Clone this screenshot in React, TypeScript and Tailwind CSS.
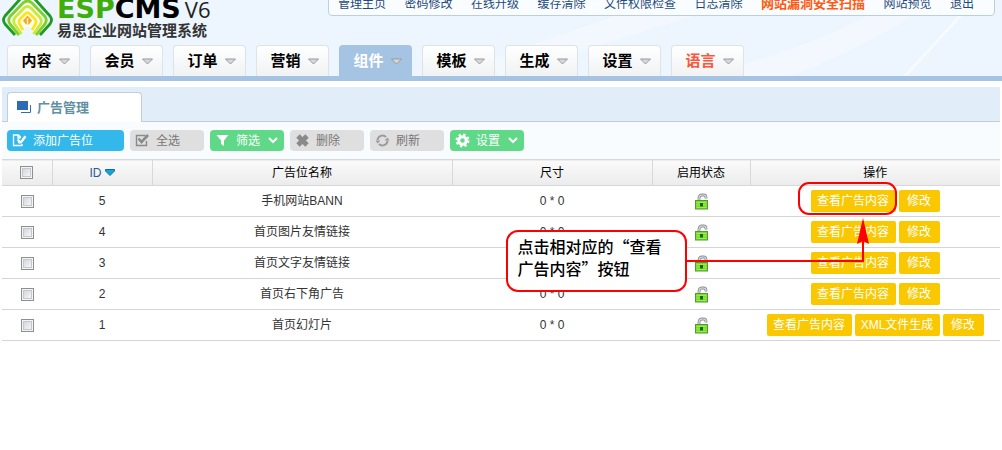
import React from 'react';

const topLinks = [
  '管理主页',
  '密码修改',
  '在线升级',
  '缓存清除',
  '文件权限检查',
  '日志清除',
  '网站漏洞安全扫描',
  '网站预览',
  '退出',
];

const navItems = ['内容', '会员', '订单', '营销', '组件', '模板', '生成', '设置', '语言'];

type Ad = {
  id: number;
  name: string;
  size: string;
  xml?: boolean;
};

const ads: Ad[] = [
  { id: 5, name: '手机网站BANN', size: '0 * 0' },
  { id: 4, name: '首页图片友情链接', size: '0 * 0' },
  { id: 3, name: '首页文字友情链接', size: '0 * 0' },
  { id: 2, name: '首页右下角广告', size: '0 * 0' },
  { id: 1, name: '首页幻灯片', size: '0 * 0', xml: true },
];

function Logo() {
  return (
    <a href="#" className="-mt-3 flex items-start" aria-label="ESPCMS V6">
      <svg width="56" height="48" viewBox="0 0 56 48" className="shrink-0" fill="none" strokeWidth="2.8" strokeLinejoin="round">
        <path d="M9 36 L27.5 6 L46 36 L38 47 L27.5 38 L17 47 Z" fill="#fbfff0" />
        <path d="M15 47 L5 36 Q2 32 5 28 L22 9 Q27.5 4 33 9 L50 28 Q53 32 50 36 L40 47" stroke="#1f9a22" />
        <path d="M19 47 L10 36 Q7.5 32 10 28.5 L23 15 Q27.5 11 32 15 L45 28.5 Q47.5 32 45 36 L36 47" stroke="#7fd02f" />
        <path d="M21.5 46 L14.5 36 Q12.5 32.5 15 29.5 L24 20 Q27.5 17 31 20 L40 29.5 Q42.5 32.5 40.5 36 L33.5 46" stroke="#c8ea3e" />
        <path d="M23 42 L19.5 36 Q18 33 20.5 30.5 L25 26 Q27.5 23.5 30 26 L34.5 30.5 Q37 33 35.5 36 L32 42" stroke="#fbe51e" />
        <path d="M27.5 27.5 L32 32.5 L29 36.5 H26 L23 32.5 Z" fill="#f8a81a" />
        <path d="M27.5 30 V37" stroke="#fff3c0" strokeWidth="1.4" />
      </svg>
      <span className="ml-px flex flex-col pt-[9px]">
        <span className="flex items-baseline text-[27px] leading-6 font-bold whitespace-nowrap text-black font-['DejaVu_Sans',sans-serif]">
          <span className="text-[#3fae0a]">ESP</span>CMS
          <span className="ml-1 text-[22px] font-normal text-[#222] font-['Open_Sans',sans-serif]">V6</span>
        </span>
        <span className="text-[15px] leading-5 font-bold whitespace-nowrap text-[#333]">易思企业网站管理系统</span>
      </span>
    </a>
  );
}

// Pale light beams behind the header
function Beams() {
  return (
    <svg className="absolute inset-0 h-full w-full" viewBox="0 0 1002 76" preserveAspectRatio="none">
      <path d="M490 60 L620 14 L700 14 L500 76 Z" fill="#fff" opacity="0.35" />
      <path d="M790 76 Q860 50 915 14 L870 14 Q800 52 700 76 Z" fill="#fff" opacity="0.35" />
      <path d="M905 76 L962 14" stroke="#fff" strokeWidth="3" opacity="0.6" />
    </svg>
  );
}

function NavArrow() {
  return (
    <svg width="11" height="7" viewBox="0 0 11 7">
      <path d="M0.5 1 H10.5 L5.5 6 Z" fill="#d8d8d8" stroke="#999" />
    </svg>
  );
}

function OpenLock() {
  return (
    <svg width="13" height="17" viewBox="0 0 13 17" className="mx-auto" role="img" aria-label="启用">
      <path d="M4 8 V5 Q4.5 2 7 2 H8.5 Q11 2 11 4.5 V5.5" fill="none" stroke="#8b8f96" strokeWidth="2.8" />
      <path d="M4 8 V5 Q4.5 2 7 2 H8.5 Q11 2 11 4.5 V5" fill="none" stroke="#dcdfe3" strokeWidth="1.1" />
      <rect x="0.5" y="7.5" width="12" height="8.5" fill="#78dc2c" stroke="#4f9c2a" />
      <path d="M1.5 9.5 H11.5 M1.5 12 H11.5 M1.5 14.5 H11.5" stroke="#a5f060" strokeWidth="0.8" />
      <path d="M5 10 H8 V13.5 H5 Z" fill="#1f6410" />
    </svg>
  );
}

function Check({ label }: { label: string }) {
  return (
    <input
      type="checkbox"
      aria-label={label}
      className="mx-auto block size-[13px] appearance-none border border-[#8e8f8f] bg-linear-to-br from-[#c9ced6] to-white shadow-[inset_0_0_0_1px_#f4f4f4,inset_0_0_0_2px_#c4c8cd]"
    />
  );
}

type ToolProps = {
  label: string;
  tone: string;
  wide?: boolean;
  menu?: boolean;
  children: React.ReactNode;
};

function ToolButton({ label, tone, wide, menu, children }: ToolProps) {
  return (
    <button type="button" className={`flex h-[21px] items-center rounded pl-[5px] ${wide ? 'w-[117px]' : 'w-[74px]'} ${tone}`}>
      <svg width="15" height="15" viewBox="0 0 15 15" className="shrink-0">
        {children}
      </svg>
      <span className="ml-[6px]">{label}</span>
      {menu && (
        <svg width="10" height="7" viewBox="0 0 10 7" className="ml-2" fill="none" stroke="#fff" strokeWidth="2">
          <path d="M1 1 L5 5 L9 1" />
        </svg>
      )}
    </button>
  );
}

function Toolbar() {
  const blue = 'bg-[#32b8ea] text-white';
  const gray = 'bg-[#dfdfdf] text-[#777]';
  const green = 'bg-[#5fd987] text-white';

  return (
    <div className="flex flex-wrap items-center gap-[6px] bg-[#f8fcff] px-[5px] py-2">
      <ToolButton label="添加广告位" tone={blue} wide>
        <path d="M10 11 V12.5 H1.5 V2 H6.5 L9 4.5 M6 2 V5 H8.5" fill="none" stroke="#fff" strokeWidth="1.3" />
        <path d="M5 6.5 L6.5 6 L8.5 8 L12.5 2.5 L14.5 4 L9.5 10.5 L6.5 10.5 Z" fill="#fff" />
      </ToolButton>
      <ToolButton label="全选" tone={gray}>
        <path d="M10.5 2.5 H1.5 V12.5 H11.5 V8" fill="none" stroke="#8a8a8a" strokeWidth="1.4" />
        <path d="M3.5 5.5 L6.5 9 L13 2" fill="none" stroke="#8a8a8a" strokeWidth="2.6" />
      </ToolButton>
      <ToolButton label="筛选" tone={green} menu>
        <path d="M1.5 2 H13.5 L9 7.5 V13 L6 11 V7.5 Z" fill="#fff" />
      </ToolButton>
      <ToolButton label="删除" tone={gray}>
        <path d="M3 3 L12 12 M12 3 L3 12" stroke="#8a8a8a" strokeWidth="4.8" />
      </ToolButton>
      <ToolButton label="刷新" tone={gray}>
        <path d="M2.5 7 A5 5 0 0 1 11 4 M12.5 8 A5 5 0 0 1 4 11" fill="none" stroke="#9a9a9a" strokeWidth="2" />
        <path d="M9.5 7.5 H14.5 L12.5 4.5 Z M0.5 7.5 H5.5 L2.5 10.5 Z" fill="#9a9a9a" />
      </ToolButton>
      <ToolButton label="设置" tone={green} menu>
        <circle cx="7.5" cy="7.5" r="3.8" fill="none" stroke="#fff" strokeWidth="3" />
        <circle cx="7.5" cy="7.5" r="5.8" fill="none" stroke="#fff" strokeWidth="2.4" strokeDasharray="2.3 2.255" />
      </ToolButton>
    </div>
  );
}

function ActionButton({ children, small }: { children: React.ReactNode; small?: boolean }) {
  return (
    <button
      type="button"
      className={`h-[22px] rounded-xs bg-[#fac800] text-center whitespace-nowrap text-white ${small ? 'w-[41px]' : 'w-[85px]'}`}
    >
      {children}
    </button>
  );
}

// Red hint that hangs off the first row's button
function Hint() {
  return (
    <div className="pointer-events-none absolute -top-2 -left-[305px] z-10 h-[110px] w-[391px]">
      <svg width="391" height="110" viewBox="0 0 391 110" className="absolute inset-0" fill="none">
        <rect x="293" y="1" width="97" height="31" rx="10" stroke="#f00" strokeWidth="2" />
        <path d="M180 79 H357 V50" stroke="#f00" strokeWidth="2" />
        <path d="M357 36 L363 62 L357 59 L351 62 Z" fill="#f00" />
      </svg>
      <p className="absolute top-12 left-0 h-[62px] w-[181px] rounded-xl border-2 border-[#f00] bg-white pt-[3px] pl-[10px] text-left text-base leading-[22px] font-medium whitespace-nowrap text-black font-['Noto_Sans_CJK_SC',sans-serif]">
        点击相对应的“查看
        <br />
        广告内容”按钮
      </p>
    </div>
  );
}

export default function App() {
  const [active, setActive] = React.useState('组件');

  return (
    <div lang="zh-CN" className="min-h-screen bg-white text-xs text-[#333] font-['Liberation_Sans','Noto_Sans_CJK_SC',sans-serif]">
      <header className="relative overflow-hidden border-b-[5px] border-[#a5c4e4] bg-[#edf5fe]">
        <Beams />
        <div className="relative flex h-[45px] items-start justify-between pr-[7px]">
          <Logo />
          <div className="-mt-2 flex h-6 w-[667px] items-center justify-between rounded-b border border-[#bccfe2] bg-[#fafdff] pr-5 pl-[9px] text-[#1f4a7a]">
            {topLinks.map((item) => (
              <a
                key={item}
                href="#"
                className={`whitespace-nowrap ${item === '网站漏洞安全扫描' ? 'text-[13px] font-bold text-[#ff5a12]' : ''}`}
              >
                {item}
              </a>
            ))}
          </div>
        </div>
        <nav className="relative flex gap-[10px] pl-[7px]">
          {navItems.map((item) => (
            <button
              key={item}
              type="button"
              onClick={() => setActive(item)}
              className={`flex h-[31px] w-[73px] items-center justify-center gap-[7px] rounded-t-sm border border-b-0 pl-1 text-[15px] font-bold ${
                item === active
                  ? 'border-[#a5c4e4] bg-[#a5c4e4] text-white'
                  : 'border-[#dfe3e6] bg-linear-to-b from-white to-[#f0f2f3]'
              } ${item === '语言' ? 'text-[#f9583c]' : item === active ? '' : 'text-black'}`}
            >
              {item}
              <NavArrow />
            </button>
          ))}
        </nav>
      </header>

      <main className="mx-[2px] mt-[6px]">
        <div className="flex h-[35px] items-end border-b border-[#c3ced4] bg-[#e2edfa] pl-[5px]">
          <h1 className="-mb-px flex h-[30px] w-[135px] items-center gap-[6px] rounded-t border border-b-0 border-[#c3ced4] bg-white pl-[9px] text-[13px] font-bold text-[#5f90a3]">
            <svg width="14" height="13" viewBox="0 0 14 13">
              <rect width="11" height="9" fill="#2b6cb5" />
              <path d="M4 11.5 H13.5 V4" fill="none" stroke="#2b6cb5" />
            </svg>
            广告管理
          </h1>
        </div>
        <Toolbar />
        <table className="w-full table-fixed border-collapse text-center">
          <colgroup>
            <col className="w-[50px]" />
            <col className="w-[100px]" />
            <col className="w-[300px]" />
            <col className="w-[200px]" />
            <col className="w-[98px]" />
            <col />
          </colgroup>
          <thead className="text-black">
            <tr className="h-[26px] border-y border-[#d5d9dc] bg-linear-to-b from-[#fafafa] to-[#ececec] *:border-r *:border-[#d8d8d8] *:font-normal *:last:border-r-0">
              <th>
                <Check label="全选" />
              </th>
              <th>
                <a href="#" className="inline-flex items-center gap-[3px] text-[#2b5a94]">
                  ID
                  <svg width="10" height="7" viewBox="0 0 10 7">
                    <path d="M0.5 0.5 H9.5 V2 L5 6.5 L0.5 2 Z" fill="#13a4de" stroke="#0b6f9e" />
                  </svg>
                </a>
              </th>
              <th>广告位名称</th>
              <th>尺寸</th>
              <th>启用状态</th>
              <th>操作</th>
            </tr>
          </thead>
          <tbody>
            {ads.map((ad, i) => (
              <tr key={ad.id} className="h-[31px] border-b border-[#d5d5d5]">
                <td>
                  <Check label={ad.name} />
                </td>
                <td>{ad.id}</td>
                <td>{ad.name}</td>
                <td>{ad.size}</td>
                <td>
                  <OpenLock />
                </td>
                <td>
                  <div className="flex justify-center gap-[3px]">
                    <div className="relative flex">
                      <ActionButton>查看广告内容</ActionButton>
                      {i === 0 && <Hint />}
                    </div>
                    {ad.xml && <ActionButton>XML文件生成</ActionButton>}
                    <ActionButton small>修改</ActionButton>
                  </div>
                </td>
              </tr>
            ))}
          </tbody>
        </table>
      </main>
    </div>
  );
}
